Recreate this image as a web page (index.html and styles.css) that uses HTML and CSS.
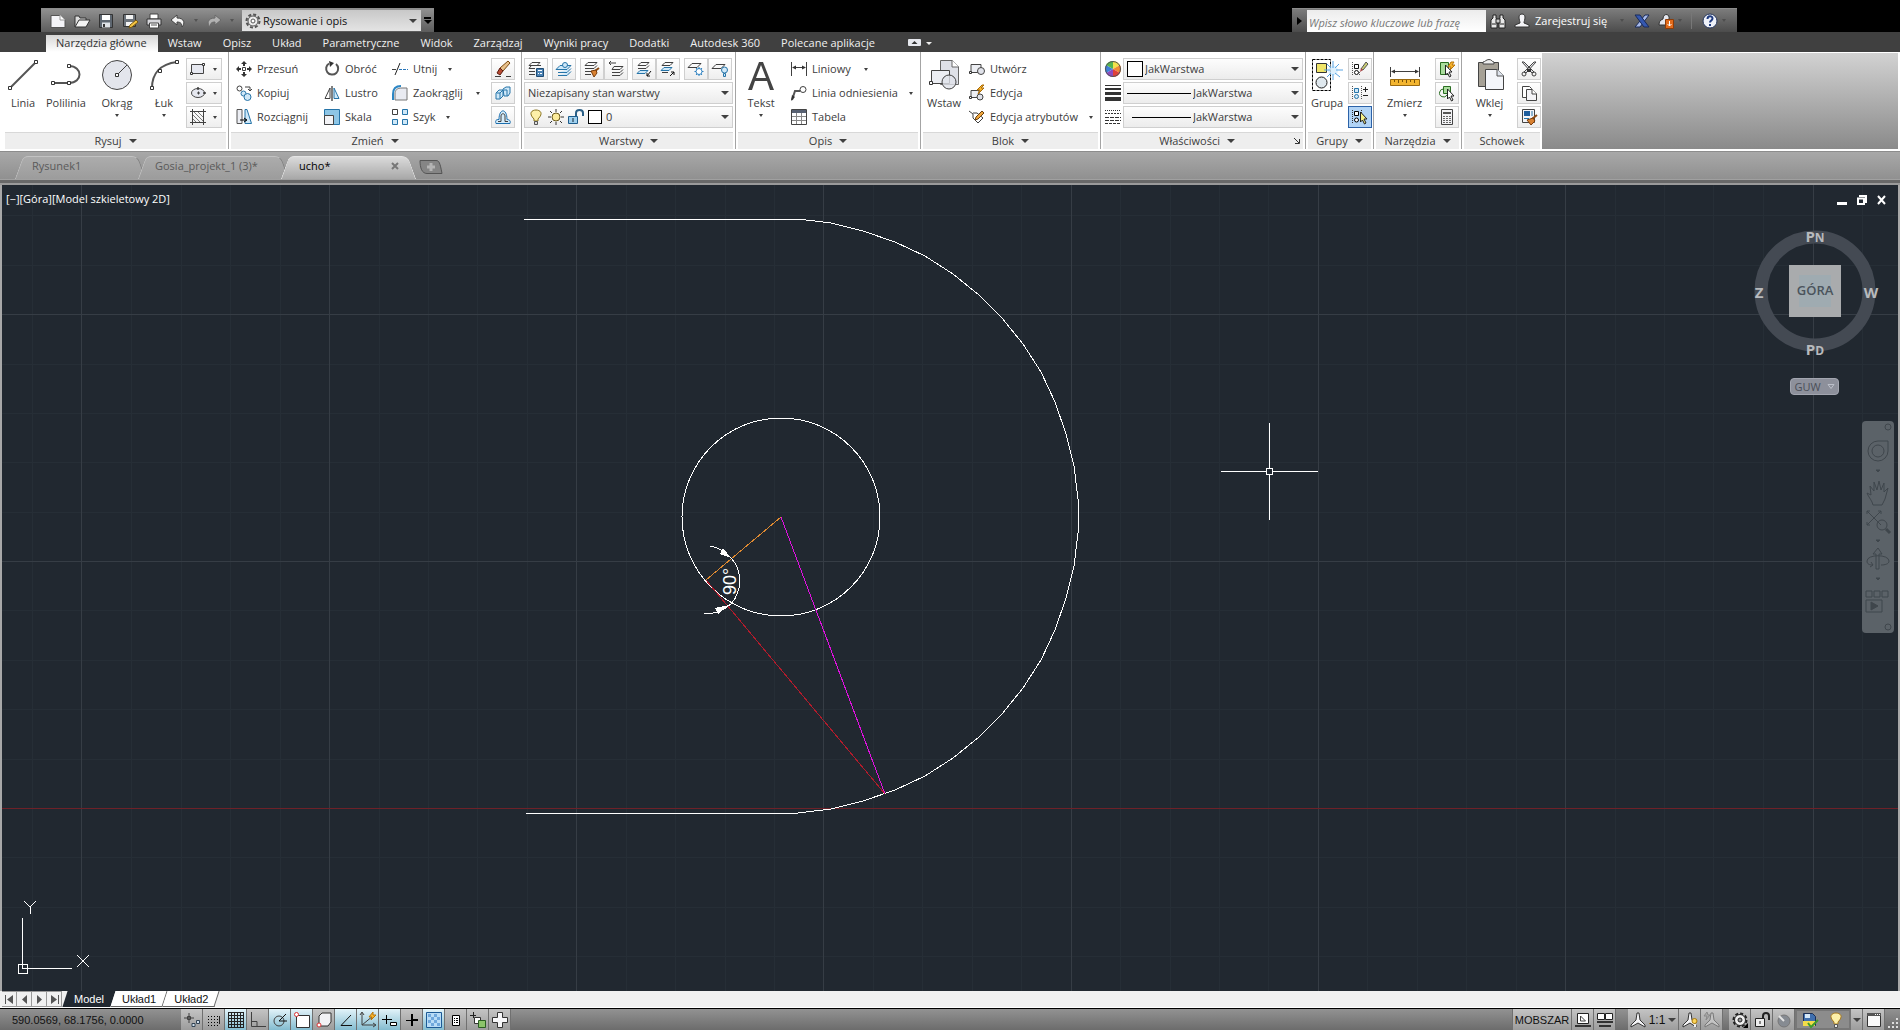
FILE: index.html
```html
<!DOCTYPE html>
<html lang="pl">
<head>
<meta charset="utf-8">
<title>ucho* - AutoCAD</title>
<link rel="stylesheet" href="styles.css">
</head>
<body>
<header class="titlebar">
  <div class="quick">
    <button class="qbtn" aria-label="Nowy"><svg class="i16" viewBox="0 0 16 16"><path d="M1 2.500h9l5 5v7H1z" fill="#f4f4f8" stroke="#555"/><path d="M10 2v5h5" stroke="#999" fill="#fff"/></svg></button>
    <button class="qbtn" aria-label="Otwórz"><svg class="i16" viewBox="0 0 16 16"><path d="M1 14V3h4l1 2h6v3" fill="#ddd" stroke="#333"/><path d="M1 14l4-7h11l-4 7z" fill="#f3f3f3" stroke="#333"/></svg></button>
    <button class="qbtn" aria-label="Zapisz"><svg class="i16" viewBox="0 0 16 16"><path d="M1.500 1.500h13v13h-13z" fill="#5d6670" stroke="#333"/><path d="M4 2h8v5H4z" fill="#fff"/><path d="M4 9.500h8v5H4z" fill="#dfe3e8"/><path d="M5 11h2v3H5z" fill="#333"/></svg></button>
    <button class="qbtn" aria-label="Zapisz jako"><svg class="i16" viewBox="0 0 16 16"><path d="M1.500 1.500h12v12h-12z" fill="#6c737b" stroke="#333"/><path d="M4 2h7v4H4zM4 9h7v4H4z" fill="#f4f4f4"/><path d="M7 15l1-3 6-5 2 2-6 5z" fill="#f5c542" stroke="#7a5a10"/></svg></button>
    <button class="qbtn" aria-label="Drukuj"><svg class="i16" viewBox="0 0 16 16"><path d="M4 1h8v5H4z" fill="#fff" stroke="#444"/><path d="M1 6h14v6H1z" fill="#d8d8dc" stroke="#333"/><path d="M3.500 10h9v5h-9z" fill="#fff" stroke="#444"/><path d="M5 12h6" stroke="#555"/></svg></button>
    <button class="qbtn" aria-label="Cofnij"><svg class="i16" viewBox="0 0 16 16"><path d="M7 2L1 7l6 5V9c4 0 5 2 5 5 3-3 3-9-5-9z" fill="#f4f4f4" stroke="#444"/></svg></button>
    <i class="tri faint"></i>
    <button class="qbtn redo" aria-label="Ponów"><svg class="i16" viewBox="0 0 16 16"><path d="M9 2l6 5-6 5V9c-4 0-5 2-5 5-3-3-3-9 5-9z" fill="#b2b2b2" stroke="#6a6a6a"/></svg></button>
    <i class="tri faint"></i>
    <label class="workspace">
      <svg class="i16" viewBox="0 0 16 16"><circle cx="8" cy="8" r="6.500" fill="none" stroke="#555" stroke-width="2" stroke-dasharray="3 2"/><circle cx="8" cy="8" r="5" fill="#eee" stroke="#555"/><circle cx="8" cy="8" r="2" fill="#fff" stroke="#555"/></svg>
      <select aria-label="Obszar roboczy"><option>Rysowanie i opis</option></select>
      <i class="tri big"></i>
    </label>
    <button class="more" aria-label="Dostosuj pasek"><i class="bar"></i><i class="tri big"></i></button>
  </div>
  <div class="infocenter">
    <button class="expand" aria-label="Zwiń"><svg width="5" height="8" viewBox="0 0 5 8"><path d="M0 0l5 4-5 4z"/></svg></button>
    <input class="search" type="text" aria-label="Szukaj" placeholder="Wpisz słowo kluczowe lub frazę">
    <button class="ibtn" aria-label="Wyszukaj"><svg class="i16" viewBox="0 0 16 16"><path d="M3 2h3v3l1 2v8H1V7l2-2zM10 2h3v3l2 2v8H9V7l1-2z" fill="#e8e8e8" stroke="#222"/><path d="M6 6h4v4H6z" fill="#ccc" stroke="#222"/><path d="M2 11h4M10 11h4" stroke="#222"/></svg></button>
    <button class="sign"><svg class="i16" viewBox="0 0 16 16"><path d="M5 4c0-4 6-4 6 0 0 3-1 4-1 6l5 2v2H1v-2l5-2c0-2-1-3-1-6z" fill="#f3f3f6" stroke="#333"/></svg>Zarejestruj się<i class="tri faint"></i></button>
    <button class="ibtn" aria-label="Exchange"><svg class="i16" viewBox="0 0 16 16"><path d="M15 2h-4L1 14h5z" fill="#a9bbea" stroke="#182a5a"/><path d="M1 2h5l9 12h-5z" fill="#3558b0" stroke="#182a5a"/></svg></button>
    <button class="ibtn" aria-label="Autodesk 360"><svg class="i16" viewBox="0 0 16 16"><path d="M5 6c0-6 7-6 6 0l2 6H1c0-3 1-5 4-6z" fill="#e4e6ee" stroke="#333"/><path d="M7.500 6.500h8v9h-8z" fill="#e26a1b" stroke="#8a3c0a"/><path d="M11.500 8v5m-2-2l2 2 2-2" fill="none" stroke="#fff"/></svg></button>
    <i class="tri faint"></i>
    <span class="vsep"></span>
    <button class="ibtn" aria-label="Pomoc"><svg class="i16" viewBox="0 0 16 16"><circle cx="8" cy="8" r="7" fill="#eef1f8" stroke="#26365c"/><path d="M5.500 6c0-3.500 5-3.500 5-.5 0 2-2.500 2-2.500 4" fill="none" stroke="#1f3b80" stroke-width="2"/><path d="M7 11h2v2H7z" fill="#1f3b80"/></svg></button>
    <i class="tri faint"></i>
  </div>
</header>

<nav class="tabs">
  <button class="tab on">Narzędzia główne</button><button class="tab">Wstaw</button><button class="tab">Opisz</button><button class="tab">Układ</button><button class="tab">Parametryczne</button><button class="tab">Widok</button><button class="tab">Zarządzaj</button><button class="tab">Wyniki pracy</button><button class="tab">Dodatki</button><button class="tab">Autodesk 360</button><button class="tab">Polecane aplikacje</button>
  <button class="minimize" aria-label="Minimalizuj wstążkę"><svg width="24" height="8" viewBox="0 0 24 8"><rect width="13" height="7" rx="1" fill="#e6e8ee"/><path d="M3.500 5h6l-3-3z" fill="#333"/><path d="M18 3h6l-3 3z" fill="#eee"/></svg></button>
</nav>

<main class="ribbon">
  <section class="panel draw">
    <div class="body">
      <button class="large linia"><svg class="i32" viewBox="0 0 32 32"><path d="M3 29L29 3" class="l2"/><path d="M1.500 27.500h3v3h-3zM27.500 1.500h3v3h-3z" class="pt"/></svg><span>Linia</span></button>
      <button class="large poli"><svg class="i32" viewBox="0 0 32 32"><path d="M3 24h16c14 0 14-17 0-17" class="l2"/><path d="M1.500 22.500h3v3h-3zM17.500 22.500h3v3h-3zM17.500 5.500h3v3h-3z" class="pt"/></svg><span>Polilinia</span></button>
      <button class="large okr"><svg class="i32" viewBox="0 0 32 32"><circle cx="16" cy="16" r="14.500" fill="#e3e5ec" stroke="#444"/><path d="M16 16L26 6" class="ln"/><path d="M14.500 14.500h3v3h-3z" class="pt"/></svg><span>Okrąg</span><i class="tri"></i></button>
      <button class="large luk"><svg class="i32" viewBox="0 0 32 32"><path d="M4 29C4 15 12 5 29 3" class="l2"/><path d="M2.500 27.500h3v3h-3zM10.500 10.500h3v3h-3zM27.500 1.500h3v3h-3z" class="pt"/></svg><span>Łuk</span><i class="tri"></i></button>
      <div class="stack">
        <button class="box split" aria-label="Prostokąt"><svg class="i16" viewBox="0 0 16 16"><path d="M1.500 3.500h12v9h-12z" fill="#e6e8f0" stroke="#444"/><path d="M.5 11.500h2v2h-2zM12.500 2.500h2v2h-2z" class="pt"/></svg><i class="tri"></i></button>
        <button class="box split" aria-label="Elipsa"><svg class="i16" viewBox="0 0 16 16"><ellipse cx="8" cy="8" rx="6.500" ry="4.500" fill="#e6e8f0" stroke="#444"/><path d="M7.500 2.500h1v2h-1zM13.500 7.500h2v1h-2zM7 8h3M8.500 6.500v3" class="ln"/></svg><i class="tri"></i></button>
        <button class="box split" aria-label="Kreskowanie"><svg class="i16" viewBox="0 0 16 16"><path d="M0 2.500h16M0 13.500h16M2.500 0v16M13.500 0v16" class="ln"/><path d="M3 10l3 3M3 6l7 7M4 3l9 9M8 3l5 5" stroke="#777"/></svg><i class="tri"></i></button>
      </div>
    </div>
    <button class="title">Rysuj<i class="tri big"></i></button>
  </section>

  <section class="panel modify">
    <div class="body">
      <div class="stack c1">
        <button class="small"><svg class="i16" viewBox="0 0 16 16"><path d="M6.500 6.500h3v3h-3z" class="ln"/><path d="M8 0l3 3H9v2H7V3H5zM8 16l3-3H9v-2H7v2H5zM0 8l3-3v2h2v2H3v2zM16 8l-3-3v2h-2v2h2v2z" fill="#333"/></svg>Przesuń</button>
        <button class="small"><svg class="i16" viewBox="0 0 16 16"><circle cx="3.500" cy="3.500" r="2.500" class="ln"/><circle cx="7.500" cy="8.500" r="2.500" class="bl"/><circle cx="11.500" cy="12" r="3.500" class="bl"/><path d="M9 2h5v3m-2-1l2 2 2-2" class="ln"/></svg>Kopiuj</button>
        <button class="small"><svg class="i16" viewBox="0 0 16 16"><path d="M1 .5h5v14H1z" fill="#eceef4" stroke="#555"/><path d="M9 .5h2l4.500 14H9z" class="bl"/><path d="M4 11h6m-2-2l3 2-3 2" stroke="#000" fill="none"/></svg>Rozciągnij</button>
      </div>
      <div class="stack c2">
        <button class="small"><svg class="i16" viewBox="0 0 16 16"><path d="M12 3a6 6 0 1 1-7-.5" class="l2"/><path d="M5 0l5 2-4 4z" fill="#333"/></svg>Obróć</button>
        <button class="small"><svg class="i16" viewBox="0 0 16 16"><path d="M6 3v10.500H1z" class="ln"/><path d="M10 3v10.500h5z" class="bl"/><path d="M8 1v15" stroke="#000"/></svg>Lustro</button>
        <button class="small"><svg class="i16" viewBox="0 0 16 16"><path d="M.5.5h15v15H.5z" fill="#8ec6e6" stroke="#2674a8"/><path d="M.5 6.500h9v9h-9z" fill="#f3f3f6" stroke="#444"/></svg>Skala</button>
      </div>
      <div class="stack c3">
        <button class="small"><svg class="i16" viewBox="0 0 16 16"><path d="M0 8.500h4" class="ln"/><path d="M7 8.500h9" stroke="#2674b8" stroke-dasharray="3 1"/><path d="M8 2L3 14" stroke="#222"/></svg>Utnij<i class="tri g"></i></button>
        <button class="small"><svg class="i16" viewBox="0 0 16 16"><path d="M3 15V9c0-4 2-6 7-6h5v12z" fill="#e9ebf2" stroke="#777"/><path d="M1 15V9c0-5 3-8 8-8" fill="none" stroke="#2c86c4" stroke-width="2"/></svg>Zaokrąglij<i class="tri g far"></i></button>
        <button class="small"><svg class="i16" viewBox="0 0 16 16"><path d="M.5.5h5v5h-5z" class="ln"/><path d="M10.500.5h5v5h-5zM.5 10.500h5v5h-5zM10.500 10.500h5v5h-5z" class="bl"/></svg>Szyk<i class="tri g"></i></button>
      </div>
      <div class="stack">
        <button class="box" aria-label="Wymaż"><svg class="i16" viewBox="0 0 16 16"><path d="M13 0l2 2-7 8-3-3z" fill="#e8c08a" stroke="#7a4a10"/><path d="M5 7l3 3-3 4-3-2z" fill="#b84a32" stroke="#5a1c10"/><path d="M0 15.500h6M11 15.500h5" class="ln"/></svg></button>
        <button class="box" aria-label="Rozbij"><svg class="i16" viewBox="0 0 16 16"><path d="M1 8l3-3h4v6l-3 3H1zM8 4l3-2h4v6l-2 3H9z" class="bl"/><path d="M1 8h4v6M5 8l3-3M9 5h3v6" class="bl"/></svg></button>
        <button class="box" aria-label="Odsunięcie"><svg class="i16" viewBox="0 0 16 16"><path d="M1 14.500h14c1-3-1-4-3-4C12-1 4-1 4 10.500c-3 0-4 1-3 4z" fill="#d5ecfa" stroke="#1d6fae"/><path d="M3 12.500h3V7c0-3 4-3 4 0v5.500h3" class="ln"/></svg></button>
      </div>
    </div>
    <button class="title">Zmień<i class="tri big"></i></button>
  </section>

  <section class="panel layers">
    <div class="body col">
      <div class="row">
        <button class="box" aria-label="Właściwości warstwy"><svg class="i16" viewBox="0 0 16 16"><path d="M4 1.500h8l-3 3H1zM1 7.500h6M1 10.500h6M1 13.500h6M3 5l-2 2.500M9 4.500h4" class="ln"/><path d="M8.500 7.500h7v8h-7z" fill="#4b82b4" stroke="#1f4c74"/><path d="M10 9h4v1h-4zM10 12h1v1h-1zM12 12h2v1h-2z" fill="#fff"/></svg></button>
        <button class="box" aria-label="Ustaw bieżącą"><svg class="i16" viewBox="0 0 16 16"><path d="M4 4.500h11l-4 4H0zM2 11.500h9l4-4M2 14.500h9l4-4" class="bl"/><circle cx="9" cy="4" r="2.500" class="bl"/></svg></button>
        <span class="pair"><button class="box" aria-label="Dopasuj"><svg class="i16" viewBox="0 0 16 16"><path d="M4 1.500h9l-3 3H1zM1 7.500h9l3-3M1 10.500h7M1 13.500h6" class="ln"/><path d="M15 7l-4 3" stroke="#8a4a14" stroke-width="2"/><path d="M7 10l5-1 1 3-3 4z" fill="#d98232" stroke="#7a3c0a"/></svg></button><button class="box" aria-label="Poprzednia"><svg class="i16" viewBox="0 0 16 16"><path d="M6 5.500h9l-3 3H4zM4 11.500h8l3-3M4 14.500h8l3-3M1 2h7M3 0L1 2l2 2" class="ln"/></svg></button></span>
        <span class="pair"><button class="box" aria-label="Izoluj"><svg class="i16" viewBox="0 0 16 16"><path d="M5 1.500h8l-3 3H2zM2 7.500h8l3-3" class="ln"/><path d="M4 9.500h8l-3 3H1z" class="bl"/><path d="M15 10l-4 5m0-3v3h3" stroke="#111" fill="none"/></svg></button><button class="box" aria-label="Cofnij izolację"><svg class="i16" viewBox="0 0 16 16"><path d="M5 1.500h8l-3 3H2zM2 11.500h6" class="ln"/><path d="M4 6.500h8l-3 3H1z" class="bl"/><path d="M10 15l4-4m-3 0h3v3" stroke="#111" fill="none"/></svg></button></span>
        <span class="pair"><button class="box" aria-label="Blokuj"><svg class="i16" viewBox="0 0 16 16"><path d="M4 2.500h9l-4 4H0z" class="ln"/><path d="M11 6v9M6.500 10.500h9M8 7l6 7M14 7l-6 7" stroke="#2c80c0"/><circle cx="11" cy="10.500" r="3" fill="#fff" stroke="#2c80c0"/></svg></button><button class="box" aria-label="Wyłącz"><svg class="i16" viewBox="0 0 16 16"><path d="M4 3.500h9l-4 4H0z" class="ln"/><circle cx="12.500" cy="9" r="3" class="bl"/><path d="M11.500 12.500h2v3h-2z" class="bl"/></svg></button></span>
      </div>
      <label class="combo"><select class="grow" aria-label="Stan warstwy"><option>Niezapisany stan warstwy</option></select><i class="tri big"></i></label>
      <label class="combo layer">
        <svg class="i16" viewBox="0 0 16 16"><path d="M6 10C0 4 4 1 8 1s8 3 2 9v2H6z" fill="#fdf0a8" stroke="#8a7420"/><path d="M6.500 12.500h3v3h-3z" fill="#ddd" stroke="#555"/></svg>
        <svg class="i16" viewBox="0 0 16 16"><circle cx="8" cy="8" r="4" fill="#fbeb9a" stroke="#6b5a1c"/><path d="M8 0v3M8 13v3M0 8h3M13 8h3M2 2l2 2M12 12l2 2M14 2l-2 2M4 12l-2 2" stroke="#333"/></svg>
        <svg class="i16" viewBox="0 0 16 16"><path d="M.5 7.500h9v7h-9z" fill="#9fd0ee" stroke="#1d5c8c"/><path d="M8 7V4c0-4 7-4 7 0v3" fill="none" stroke="#2a5f86" stroke-width="2"/><path d="M5 9v4" stroke="#123"/></svg>
        <span class="swatch"></span>
        <select class="grow" aria-label="Warstwa"><option>0</option></select><i class="tri big"></i>
      </label>
    </div>
    <button class="title">Warstwy<i class="tri big"></i></button>
  </section>

  <section class="panel annotate">
    <div class="body">
      <button class="large tekst"><svg class="i32" viewBox="0 0 32 32"><path d="M3 31L14 3h4l11 28h-4l-3-9H10l-3 9zM11 19h10L16 6z" fill="#444" fill-rule="evenodd"/></svg><span>Tekst</span><i class="tri"></i></button>
      <div class="stack">
        <button class="small"><svg class="i16" viewBox="0 0 16 16"><path d="M.5 1v14M15.500 1v14M2 6.500h12" class="ln"/><path d="M1 6.500l4-2v4zM15 6.500l-4-2v4z" fill="#333"/></svg>Liniowy<i class="tri g far"></i></button>
        <button class="small"><svg class="i16" viewBox="0 0 16 16"><path d="M1 15l3-9h5" class="l2"/><path d="M0 16l1-6 3 2z" fill="#333"/><circle cx="12" cy="4.500" r="3" class="ln"/></svg>Linia odniesienia<i class="tri g"></i></button>
        <button class="small"><svg class="i16" viewBox="0 0 16 16"><path d="M.5.5h15v15H.5z" fill="#fff" stroke="#444"/><path d="M1 1h14v3H1z" fill="#596273"/><path d="M1 7.500h14M1 11.500h14M5.500 4v11M10.500 4v11" stroke="#888"/></svg>Tabela</button>
      </div>
    </div>
    <button class="title">Opis<i class="tri big"></i></button>
  </section>

  <section class="panel block">
    <div class="body">
      <button class="large wst"><svg class="i32" viewBox="0 0 32 32"><path d="M12.500 1.500h12l6 6v18h-18z" fill="#dfe1e8" stroke="#666"/><path d="M24 1v7h7" fill="#fff" stroke="#666"/><path d="M3.500 11.500h18v13h-18z" fill="#eceef3" stroke="#444"/><circle cx="21" cy="23" r="7" fill="#e0e2ea" fill-opacity=".8" stroke="#444"/><path d="M1.500 22.500h3v3h-3z" class="pt"/></svg><span>Wstaw</span></button>
      <div class="stack">
        <button class="small"><svg class="i16" viewBox="0 0 16 16"><path d="M2 3.500h10v8H2z" fill="#eceef3" stroke="#444"/><circle cx="12" cy="10" r="3.500" fill="#e0e2ea" stroke="#444"/><path d="M.5 10.500h2v2h-2z" class="pt"/></svg>Utwórz</button>
        <button class="small"><svg class="i16" viewBox="0 0 16 16"><path d="M2 5.500h8v7H2z" fill="#eceef3" stroke="#444"/><circle cx="11" cy="12" r="3" fill="#e0e2ea" stroke="#444"/><path d="M13 0L8 5h3L9 9l6-6h-3l3-3z" fill="#f7b42c" stroke="#a86a08"/><path d="M.5 11.500h2v2h-2z" class="pt"/></svg>Edycja</button>
        <button class="small"><svg class="i16" viewBox="0 0 16 16"><path d="M0 2l4 3v4l5 5 5-5-6-5H4" class="ln"/><path d="M13 2l2 2-6 6-3 1 1-3z" fill="#f0a63c" stroke="#6a4210"/></svg>Edycja atrybutów<i class="tri g"></i></button>
      </div>
    </div>
    <button class="title">Blok<i class="tri big"></i></button>
  </section>

  <section class="panel props">
    <div class="body col">
      <div class="prop"><svg class="i16" viewBox="0 0 16 16"><path d="M8 8V0a8 8 0 0 1 7 4z" fill="#f3e24a"/><path d="M8 8l7-4a8 8 0 0 1 0 8z" fill="#ef8a34"/><path d="M8 8l7 4a8 8 0 0 1-7 4z" fill="#e0413a"/><path d="M8 8v8a8 8 0 0 1-7-4z" fill="#8b4bc0"/><path d="M8 8l-7 4a8 8 0 0 1 0-8z" fill="#3d7fd8"/><path d="M8 8L1 4a8 8 0 0 1 7-4z" fill="#54b44e"/><circle cx="8" cy="8" r="7.500" fill="none" stroke="#555"/></svg>
        <label class="combo"><span class="swatch"></span><select class="grow" aria-label="Kolor"><option>JakWarstwa</option></select><i class="tri big"></i></label></div>
      <div class="prop"><svg class="i16" viewBox="0 0 16 16"><path d="M0 0h16v1H0zM0 3h16v2H0zM0 7h16v3H0zM0 12h16v4H0z" fill="#333"/></svg>
        <label class="combo"><span class="sample wide"></span><select class="grow" aria-label="Grubość linii"><option>JakWarstwa</option></select><i class="tri big"></i></label></div>
      <div class="prop"><svg class="i16" viewBox="0 0 16 16"><path d="M0 1.500h16" stroke="#333" stroke-dasharray="1 1"/><path d="M0 4.500h16" stroke="#333" stroke-dasharray="2 1"/><path d="M0 8.500h16M0 11.500h16" stroke="#333" stroke-dasharray="4 1"/><path d="M0 14.500h16" stroke="#333" stroke-dasharray="3 1"/></svg>
        <label class="combo"><span class="sample"></span><select class="grow" aria-label="Rodzaj linii"><option>JakWarstwa</option></select><i class="tri big"></i></label></div>
    </div>
    <div class="title wlast"><button class="plain">Właściwości<i class="tri big"></i></button><button class="plain launcher" aria-label="Paleta właściwości"><svg width="6" height="6" viewBox="0 0 6 6"><path d="M0 0l5 5M5.500 1v4.500H1" fill="none" stroke="#333"/></svg></button></div>
  </section>

  <section class="panel groups">
    <div class="body">
      <button class="large gru"><svg class="i32" viewBox="0 0 32 32"><path d="M1.500.5h18v31h-18z" fill="none" stroke="#000" stroke-dasharray="3 1"/><path d="M5.500 4.500h10v9h-10z" fill="#f0e56a" stroke="#333"/><circle cx="10.500" cy="23.500" r="5.500" fill="#dfe8ee" stroke="#222"/><circle cx="22" cy="11.500" r="5" fill="#d5ecfc" fill-opacity=".8"/><path d="M22 2v7M22 15v6M13 11h6M25 11h7M16 5l4 4M28 5l-4 4M16 18l4-4M29 18l-5-4" stroke="#5aa5e4"/></svg><span>Grupa</span></button>
      <div class="stack">
        <button class="box" aria-label="Rozgrupuj"><svg class="i16" viewBox="0 0 16 16"><path d="M.5 1v14M7.500 11v4" stroke="#555" stroke-dasharray="1 1"/><path d="M2.500 3.500h4v4h-4z" fill="#fff" stroke="#111"/><circle cx="4.500" cy="11.500" r="2" fill="#fff" stroke="#111"/><path d="M14 1l2 2-5 6-2-1z" fill="#c9cc72" stroke="#555"/><path d="M9 7l2 2-3 2z" fill="#a44"/></svg></button>
        <button class="box" aria-label="Edycja grupy"><svg class="i16" viewBox="0 0 16 16"><path d="M.5 1v14M9.500 1v14" stroke="#555" stroke-dasharray="1 1"/><path d="M2.500 3.500h4v4h-4z" class="bl"/><circle cx="4.500" cy="11.500" r="2" class="bl"/><path d="M11 4.500h5M13.500 2v5M11 10.500h5" stroke="#222"/></svg></button>
        <button class="box on" aria-label="Wybór grupy"><svg class="i16" viewBox="0 0 16 16"><path d="M.5 1v14M9.500 1v5" stroke="#333" stroke-dasharray="1 1"/><path d="M2.500 2.500h4v4h-4z" fill="#fff" stroke="#000"/><circle cx="4.500" cy="11" r="2" fill="#fff" stroke="#000"/><path d="M8.500 3v10l2-2 2 4 1.500-1-2-4h3z" fill="#f4f08a" stroke="#222"/></svg></button>
      </div>
    </div>
    <button class="title">Grupy<i class="tri big"></i></button>
  </section>

  <section class="panel utils">
    <div class="body">
      <button class="large zmi"><svg class="i32" viewBox="0 0 32 32"><path d="M1.500 8v10M30.500 8v10M3 12.500h26" class="ln"/><path d="M2 12.500l4-2v4zM30 12.500l-4-2v4z" fill="#333"/><path d="M1.500 20.500h29v6h-29z" fill="#f3b52f" stroke="#9a6a10"/><path d="M5.500 21v2M9.500 21v3M13.500 21v2M17.500 21v3M21.500 21v2M25.500 21v3" stroke="#7a5208"/></svg><span>Zmierz</span><i class="tri"></i></button>
      <div class="stack">
        <button class="box" aria-label="Szybki wybór"><svg class="i16" viewBox="0 0 16 16"><path d="M1.500 1.500h8v12h-8z" fill="#a9dc9c" stroke="#2b6e22"/><path d="M12 1L9 6h3l-1 3 5-5h-3l2-3z" fill="#f7b42c" stroke="#b87408"/><path d="M6.500 4v10l2-2 2 4 1.500-1-2-4h3z" fill="#fff" stroke="#222"/></svg></button>
        <button class="box" aria-label="Wybierz podobne"><svg class="i16" viewBox="0 0 16 16"><path d="M5 4a4 4 0 1 0 3 6" fill="none" stroke="#2b6e22"/><path d="M4.500 1.500h7v7h-7z" fill="#a9dc9c" stroke="#2b6e22"/><path d="M8.500 4v10l2-2 2 4 1.500-1-2-4h3z" fill="#fff" stroke="#222"/></svg></button>
        <button class="box" aria-label="Kalkulator"><svg class="i16" viewBox="0 0 16 16"><path d="M2.500.5h11v15h-11z" fill="#f2f2f5" stroke="#444"/><path d="M4 3h8v2H4z" fill="#555"/><path d="M4 7.500h8M4 9.500h8M4 11.500h8M4 13.500h8" stroke="#666" stroke-dasharray="2 1"/></svg></button>
      </div>
    </div>
    <button class="title">Narzędzia<i class="tri big"></i></button>
  </section>

  <section class="panel clip">
    <div class="body">
      <button class="large wkl"><svg class="i32" viewBox="0 0 32 32"><path d="M4.500 3.500h20v24h-20z" fill="#a6a196" stroke="#444"/><path d="M9 5V3c2 0 3-2.500 6-2.500S18 3 20 3v2z" fill="#eee" stroke="#444"/><path d="M11.500 10.500h12l6 6v14h-18z" fill="#f4f6fa" stroke="#444"/><path d="M23 10v7h7" fill="#dfe5ee" stroke="#555"/></svg><span>Wklej</span><i class="tri"></i></button>
      <div class="stack">
        <button class="box" aria-label="Wytnij"><svg class="i16" viewBox="0 0 16 16"><path d="M1 1h2l10 10-2 1zM15 1h-2L3 11l2 1z" fill="#e4e4e8" stroke="#444"/><path d="M6 8h4v3H6z" fill="#333"/><circle cx="3" cy="13" r="2" class="ln"/><circle cx="13" cy="13" r="2" class="ln"/></svg></button>
        <button class="box" aria-label="Kopiuj"><svg class="i16" viewBox="0 0 16 16"><path d="M1.500 1.500h7l2 2v9h-9z" fill="#fff" stroke="#444"/><path d="M5.500 4.500h6l4 4v7h-10z" fill="#f4f4f7" stroke="#444"/><path d="M11 4v5h5" stroke="#444" fill="#fff"/></svg></button>
        <button class="box" aria-label="Wklej specjalnie"><svg class="i16" viewBox="0 0 16 16"><path d="M1.500.5h12v13h-12z" fill="#f4f4f7" stroke="#444"/><path d="M3 2h6v5H3z" fill="#1d5c9c"/><path d="M11 2v5M3 9.500h5" stroke="#2674a8"/><path d="M16 6l-5 4" stroke="#8a4a14" stroke-width="2"/><path d="M6 11l6-2 2 3-4 4z" fill="#d98232" stroke="#7a3c0a"/></svg></button>
      </div>
    </div>
    <div class="title">Schowek</div>
  </section>
  <div class="rest"></div>
</main>

<nav class="docs">
  <button class="doc d1"><span>Rysunek1</span></button>
  <button class="doc d2"><span>Gosia_projekt_1 (3)*</span></button>
  <button class="doc d3 on"><span>ucho*</span><svg width="8" height="8" viewBox="0 0 8 8"><path d="M1 1l6 6M7 1L1 7" stroke="#777" stroke-width="2"/></svg></button>
  <button class="newdoc" aria-label="Nowa karta"><svg width="24" height="16" viewBox="0 0 24 16"><path d="M1 1.500h16c3 0 4 2 6 13H8C3 14.500 1 9 1 1.500z" fill="#858585" stroke="#555"/><path d="M12 4v8M8 8h8" stroke="#b4b4b4" stroke-width="3"/></svg></button>
</nav>
<div class="frame"></div>

<section class="canvas">
  <svg class="drawing" aria-label="Rysunek" shape-rendering="crispEdges">
    <g transform="translate(-2 -185)" fill="none" stroke-width="1">
      <path class="minor" d="M32 185v2000M131 185v2000M181 185v2000M230 185v2000M280 185v2000M379 185v2000M428 185v2000M477 185v2000M527 185v2000M626 185v2000M675 185v2000M725 185v2000M774 185v2000M873 185v2000M922 185v2000M972 185v2000M1021 185v2000M1120 185v2000M1170 185v2000M1219 185v2000M1268 185v2000M1367 185v2000M1417 185v2000M1466 185v2000M1516 185v2000M1615 185v2000M1664 185v2000M1713 185v2000M1763 185v2000M1862 185v2000M2 215h4000M2 265h4000M2 364h4000M2 413h4000M2 462h4000M2 512h4000M2 610h4000M2 660h4000M2 709h4000M2 759h4000M2 857h4000M2 907h4000M2 956h4000"/>
      <path class="major" d="M81 185v2000M329 185v2000M576 185v2000M823 185v2000M1071 185v2000M1318 185v2000M1565 185v2000M1813 185v2000M2 314h4000M2 561h4000"/>
      <path class="axis" d="M2 808h4000"/>
      <path stroke="#fff" d="M524 219H798L831 223 863 231 895 242 925 256 953 274 979 295 1002 318 1023 344 1041 372 1055 402 1066 434 1074 466 1078 499V533L1074 566 1066 598 1055 630 1041 660 1023 688 1002 714 979 737 953 758 925 776 895 790 863 801 831 809 798 813H526"/>
      <circle cx="781" cy="517" r="99" stroke="#fff"/>
      <path stroke="#e010e0" d="M781 517L885 794"/>
      <path stroke="#b31b2b" d="M706 580L885 794"/>
      <path stroke="#e08a30" d="M706 580L781 517"/>
      <path stroke="#fff" d="M710 546c9 1 15 6 21 12 12 12 11 34 0 46-8 7-17 10-27 10"/>
      <path fill="#fff" d="M731 558l-11-4 3-6zM729 605l-14 3 3 6z"/>
      <path stroke="#fff" d="M1221 471h46M1273 471h45M1269 423v45M1269 475v45M1266 468h6v6h-6z"/>
      <text class="angle" transform="translate(736 595) rotate(-90)">90°</text>
    </g>
  </svg>
  <div class="viewlabel">[−][Góra][Model szkieletowy 2D]</div>
  <div class="winctl">
    <button aria-label="Minimalizuj"><svg width="10" height="10" viewBox="0 0 10 10"><path d="M0 7h10v3H0z" fill="#fff"/></svg></button>
    <button aria-label="Przywróć"><svg width="10" height="10" viewBox="0 0 10 10"><path d="M1 3.500h6V9H1zM3 2V1h6v6H8" fill="none" stroke="#fff" stroke-width="2"/></svg></button>
    <button aria-label="Zamknij"><svg width="10" height="10" viewBox="0 0 10 10"><path d="M1 1l7 8M8 1L1 9" stroke="#fff" stroke-width="2"/></svg></button>
  </div>
  <svg class="cube" width="130" height="122" viewBox="0 0 130 122">
    <circle cx="65" cy="61" r="54" fill="none" stroke="#444a53" stroke-width="13"/>
    <path d="M39 35h52v52H39z" fill="#a9abad"/><path d="M49 45h32v32H49z" fill="#9fabb1"/>
    <text x="65" y="65" class="face">GÓRA</text>
    <text x="65" y="12" class="dir">P<tspan class="sm">N</tspan></text><text x="65" y="125" class="dir">P<tspan class="sm">D</tspan></text>
    <text x="9" y="68" class="dir">Z</text><text x="121" y="68" class="dir">W</text>
  </svg>
  <button class="guw">GUW<svg width="8" height="5" viewBox="0 0 8 5"><path d="M1 .5h6l-3 4z" fill="none" stroke="#bcc0ca"/></svg></button>
  <div class="navbar">
    <svg width="32" height="212" viewBox="0 0 32 212" fill="none" stroke="#3f464c">
      <circle cx="26" cy="6" r="3"/><circle cx="26" cy="206" r="3"/>
      <path d="M16 20h10v10a10 10 0 1 1-10-10z"/><circle cx="16" cy="30" r="6"/>
      <path d="M10 81c-2-4-4-6-5-9l4 2-1-9 4 5V61l3 8 2-9 2 9 3-7v9l4-4-3 11-3 6h-9z"/>
      <path d="M5 90l14 14M19 90L5 104M5 93v-3h3M16 90h3v3M5 101v3h3"/><circle cx="20" cy="104" r="5"/><path d="M24 108l4 4" stroke-width="3"/>
      <path d="M14 148v-15h-3l5-6 4 6h-3v15zM5 140c0-7 22-7 22 0 0 3-4 4-8 4M5 140c0 3 2 4 6 4l-2-3M11 144l-3 2"/>
      <path d="M4 170h6v6H4zM12 170h6v6h-6zM20 170h6v6h-6zM4 179h16v12H4z"/><path d="M9 181v8l7-4z" fill="#3f464c"/>
      <path d="M14 49h4l-2 2zM14 119h4l-2 2zM14 157h4l-2 2z" fill="#3f464c"/>
    </svg>
  </div>
  <svg class="ucs" width="80" height="80" viewBox="0 0 80 80" fill="none" stroke="#fff" shape-rendering="crispEdges">
    <path d="M10 70V20M10 70h50M6 66h9v9H6zM12 3l6 6 6-6M18 9v7M65 57l12 12M77 57L65 69"/>
  </svg>
</section>

<footer>
  <div class="layouts">
    <button class="step" aria-label="Pierwszy"><svg width="9" height="9" viewBox="0 0 9 9"><path d="M0 0h1v9H0zM8 0v9L2 4.500z"/></svg></button>
    <button class="step" aria-label="Poprzedni"><svg width="9" height="9" viewBox="0 0 9 9"><path d="M7 0v9L2 4.500z"/></svg></button>
    <button class="step" aria-label="Następny"><svg width="9" height="9" viewBox="0 0 9 9"><path d="M2 0v9l5-4.500z"/></svg></button>
    <button class="step" aria-label="Ostatni"><svg width="9" height="9" viewBox="0 0 9 9"><path d="M8 0h1v9H8zM1 0v9l6-4.500z"/></svg></button>
    <button class="layout on">Model</button><button class="layout">Układ1</button><button class="layout">Układ2</button>
  </div>
  <div class="status">
    <output class="coords">590.0569, 68.1756, 0.0000</output>
    <div class="toggles">
      <button class="st" aria-label="Wiązania"><svg class="i16" viewBox="0 0 16 16"><path d="M0 6h10M5 1v10M3.500 4.500h3v3h-3z" class="ln"/><path d="M8 11.500h3v3H8zM12.500 8.500h3v3h-3z" fill="#cfe0ee" stroke="#345"/></svg></button>
      <button class="st" aria-label="Skok"><svg class="i16" viewBox="0 0 16 16"><path d="M2 4.500h10M2 7.500h10M2 10.500h10M2 13.500h12" stroke="#000" stroke-dasharray="1 2"/><path d="M13.500 4v8" stroke="#222"/></svg></button>
      <button class="st on" aria-label="Siatka"><svg class="i16" viewBox="0 0 16 16"><path d="M0 .5h16M0 3.500h16M0 6.500h16M0 9.500h16M0 12.500h16M0 15.500h16M.5 0v16M3.500 0v16M6.500 0v16M9.500 0v16M12.500 0v16M15.500 0v16" stroke="#222"/></svg></button>
      <button class="st" aria-label="Orto"><svg class="i16" viewBox="0 0 16 16"><path d="M1.500 0v14.500H16M2 9.500h5v5" class="ln"/></svg></button>
      <button class="st on" aria-label="Biegunowe"><svg class="i16" viewBox="0 0 16 16"><circle cx="7" cy="9" r="5" class="ln"/><path d="M14 2L7 9h8" stroke="#111" fill="none"/></svg></button>
      <button class="st on" aria-label="Obiekt"><svg class="i16" viewBox="0 0 16 16"><path d="M2.500 3.500h13v12h-13z" fill="#fff" stroke="#333"/><circle cx="2.500" cy="2.500" r="2" fill="#fff" stroke="#d33"/></svg></button>
      <button class="st" aria-label="Obiekt 3D"><svg class="i16" viewBox="0 0 16 16"><path d="M3 4l3-3h9v9l-3 4H3z" fill="#f2f2f5" stroke="#333"/><circle cx="3" cy="13" r="2" fill="#fff" stroke="#d33"/></svg></button>
      <button class="st on" aria-label="Śledzenie"><svg class="i16" viewBox="0 0 16 16"><path d="M13 3L3 13.500h11" fill="none" stroke="#111"/></svg></button>
      <button class="st on" aria-label="DLUW"><svg class="i16" viewBox="0 0 16 16"><path d="M2 1v12h13M2 13L13 4M0 3l2-3 2 3M13 11l3 2-3 2" class="ln"/><path d="M13 0L9 5h3l-1 3 5-5h-3z" fill="#f7b42c" stroke="#b87408"/></svg></button>
      <button class="st on" aria-label="Dynamiczne"><svg class="i16" viewBox="0 0 16 16"><path d="M0 7.500h10M4.500 3v9" stroke="#000"/><path d="M8.500 10.500h6v3h-6z" fill="#fff" stroke="#000"/></svg></button>
      <button class="st" aria-label="Szerokość linii"><svg class="i16" viewBox="0 0 16 16"><path d="M2 8.500h6" stroke="#000"/><path d="M8 2v12M8 8h6" stroke="#000" stroke-width="2"/></svg></button>
      <button class="st on" aria-label="Przezroczystość"><svg class="i16" viewBox="0 0 16 16"><path d="M.5.5h15v15H.5z" fill="#b8dcf6" stroke="#1c5a96"/><path d="M2 3.500h12M2 9.500h12" stroke="#6fa8dc" stroke-width="3" stroke-dasharray="3 3"/><path d="M5 6.500h10M5 12.500h10" stroke="#6fa8dc" stroke-width="3" stroke-dasharray="3 3"/></svg></button>
      <button class="st" aria-label="Szybkie właściwości"><svg class="i16" viewBox="0 0 16 16"><path d="M4.500 3.500h7v10h-7z" fill="#fff" stroke="#000"/><path d="M6 6h1v1H6zM8 6h2v1H8zM6 8h1v1H6zM8 8h2v1H8zM6 10h1v1H6zM8 10h2v1H8z" fill="#000"/></svg></button>
      <button class="st" aria-label="Cykl wyboru"><svg class="i16" viewBox="0 0 16 16"><path d="M0 3.500h6M3.500 0v6" stroke="#222"/><path d="M4.500 5.500h6v6h-6z" fill="#fff" stroke="#333"/><path d="M8.500 8.500h7v7h-7z" fill="#8bc46a" stroke="#2b5e22"/></svg></button>
      <button class="st" aria-label="Monitor opisów"><svg class="i16" viewBox="0 0 16 16"><path d="M5.500.5h5v5h5v5h-5v5h-5v-5h-5v-5h5z" fill="#f6f6f8" stroke="#333"/></svg></button>
    </div>
    <div class="tray">
      <button class="st text">MOBSZAR</button>
      <button class="st" aria-label="Model lub papier"><svg class="i16" viewBox="0 0 16 16"><path d="M2.500 1.500h11v10h-11z" fill="#fff" stroke="#222"/><path d="M5.500 4v5h5z" class="ln"/><path d="M0 14h16" stroke="#333" stroke-width="2"/></svg></button>
      <button class="st" aria-label="Szybki widok układów"><svg class="i16" viewBox="0 0 16 16"><path d="M.5 1.500h7v6h-7zM8.500 1.500h7v6h-7z" fill="#fff" stroke="#222"/><path d="M0 10h16M2 14h12" stroke="#333" stroke-width="2"/></svg></button>
      <span class="gap"></span>
      <button class="st scale"><svg class="i16" viewBox="0 0 16 16"><path d="M7 1h2l1 7 5 5v2l-7-4-7 4v-2l5-5z" fill="#f4f4f6" stroke="#333"/></svg>1:1<i class="tri big"></i></button>
      <button class="st" aria-label="Widoczność opisów"><svg class="i16" viewBox="0 0 16 16"><path d="M7 1h2l1 7 4 5v2l-6-4-7 4v-2l5-5z" fill="#f4f4f6" stroke="#333"/><circle cx="12.500" cy="9" r="2.500" fill="#fbd45a" stroke="#a87a10"/><path d="M12 12h2v3h-2z" fill="#eee"/></svg></button>
      <button class="st" aria-label="Automatyczne skale"><svg class="i16" viewBox="0 0 16 16"><path d="M7 1h2l1 7 5 5v2l-7-4-7 4v-2l5-5z" fill="#c4c4c4" stroke="#777"/><path d="M3 0L0 4h3l-1 4 4-5H4z" fill="#aaa" stroke="#888"/></svg></button>
      <span class="gap thin"></span>
      <button class="st" aria-label="Obszar roboczy"><svg class="i16" viewBox="0 0 16 16"><circle cx="8" cy="8" r="6.500" fill="none" stroke="#222" stroke-width="2" stroke-dasharray="3 2"/><circle cx="8" cy="8" r="5.500" fill="#eee" stroke="#222"/><circle cx="8" cy="8" r="2" fill="#999" stroke="#222"/><path d="M16 11v5h-5z" fill="#000"/></svg></button>
      <button class="st" aria-label="Blokada pasków"><svg class="i16" viewBox="0 0 16 16"><path d="M1.500 6.500h9v8h-9z" fill="#eee" stroke="#222"/><path d="M9 6V4c0-4 6-4 6 0v4" fill="none" stroke="#222" stroke-width="2"/><path d="M6 9v3" stroke="#222"/></svg></button>
      <button class="st" aria-label="Przyspieszenie sprzętowe"><svg class="i16" viewBox="0 0 16 16"><circle cx="8" cy="9" r="6" fill="#868b92" stroke="#777"/><path d="M3 4l5 5" stroke="#e4e4e4" stroke-width="2"/></svg></button>
      <div class="notify"><svg class="i16" viewBox="0 0 16 16"><path d="M1.500 1.500h9l3 3v9h-12z" fill="#3f6fae" stroke="#1b2f55"/><path d="M3 2h5v4H3z" fill="#d5e8f8"/><path d="M1 9h12v5H1z" fill="#f3dc4a"/><path d="M6 11l3 4 7-7" fill="none" stroke="#3f9b2c" stroke-width="2"/></svg><svg class="i16" viewBox="0 0 16 16"><path d="M6 10C0 4 4 1 8 1s8 3 2 9v2H6z" fill="#fdf0a8" stroke="#a87a20"/><path d="M6.500 12.500h3v3h-3z" fill="#eee" stroke="#555"/></svg></div>
      <button class="st narrow" aria-label="Menu paska stanu"><i class="tri big"></i></button>
      <button class="st" aria-label="Czysty ekran"><svg class="i16" viewBox="0 0 16 16"><path d="M1.500 1.500h13v13h-13z" fill="#fafafa" stroke="#333"/><path d="M1 1h14v3H1z" fill="#555"/><path d="M9 2.500h5" stroke="#fff" stroke-dasharray="1 1"/></svg></button>
      <svg class="grip" width="14" height="14" viewBox="0 0 14 14"><path d="M12 2v2M8 6v2M12 6v2M4 10v2M8 10v2M12 10v2" stroke="#ddd" stroke-width="2"/></svg>
    </div>
  </div>
</footer>
</body>
</html>
```
FILE: styles.css
```css
* { box-sizing: border-box; }
html, body { height: 100%; }
body { margin: 0; display: flex; flex-direction: column; background: #000; color: #3c3c3c; font: 11px/16px "Open Sans", "Noto Sans", sans-serif; overflow: hidden; }
button, select, input { font: inherit; color: inherit; border: 0; padding: 0; margin: 0; background: none; border-radius: 0; }
select { appearance: none; outline: 0; }
svg { flex: none; display: block; overflow: visible; }
button { white-space: nowrap; }

.i16 { width: 16px; height: 16px; }
.i32 { width: 32px; height: 32px; }
.ln { fill: none; stroke: #404040; }
.l2 { fill: none; stroke: #555; stroke-width: 2; }
.pt { fill: #fff; stroke: #333; }
.bl { fill: #cfe8f8; stroke: #2674a8; }

.tri { flex: none; width: 0; height: 0; border: 2px solid transparent; border-top: 3px solid #404040; border-bottom: 0; }
.tri.big { border-width: 4px 4px 0; }
.tri.faint { border-top-color: #444; opacity: .7; }
.tri.g { margin-left: 6px; }
.tri.g.far { margin-left: 8px; }

/* title bar */
.titlebar { flex: none; height: 32px; display: flex; justify-content: space-between; align-items: flex-end; padding: 0 163px 0 41px; }
.quick, .infocenter { height: 24px; display: flex; align-items: center; background: linear-gradient(#7c7c7c, #4c4c4c); border-top: 1px solid #8c8c8c; }
.quick { width: 393px; padding-left: 5px; background: linear-gradient(#909090, #5c5c5c); }
.qbtn { width: 24px; display: grid; place-items: center; }
.quick > .faint { margin: 0 4px; }
.redo { width: 24px; }
.workspace { margin-left: 4px; width: 179px; height: 21px; display: flex; align-items: center; gap: 2px; padding: 0 4px 0 3px; background: linear-gradient(#c8c8c8, #e4e4e4); color: #111; }
.workspace select { flex: 1; }
.more { flex: 1; display: flex; flex-direction: column; align-items: center; gap: 1px; }
.more .bar { width: 7px; height: 2px; background: #000; }
.more .tri { border-top-color: #000; }
.infocenter { width: 445px; }
.expand { width: 15px; display: grid; place-items: center; }
.search { width: 179px; height: 22px; padding: 3px 2px 0; background: linear-gradient(#ececec, #fff); font-style: italic; }
.search::placeholder { color: #777; opacity: 1; }
.ibtn { width: 24px; display: grid; place-items: center; }
.sign { width: 120px; display: flex; align-items: center; gap: 5px; padding-left: 4px; color: #fff; }
.sign .tri { margin-left: 8px; }
.vsep { width: 1px; height: 16px; background: #777; margin: 0 6px 0 9px; }

/* ribbon tabs */
.tabs { flex: none; height: 20px; background: #404040; display: flex; align-items: flex-end; padding-left: 46px; }
.tab { height: 17px; padding: 0 11px 2px 10px; color: #f0f0f0; line-height: 15px; }
.tab.on { background: linear-gradient(#d6d6d6, #fff); color: #333; }
.minimize { margin: 0 0 5px 22px; }

/* ribbon */
.ribbon { flex: none; height: 99px; display: flex; background: #fff; padding: 0 2px 2px 1px; }
.panel { flex: none; display: flex; flex-direction: column; border-right: 1px solid #a4a4a4; background: #fff; }
.body { flex: 1; display: flex; padding-top: 6px; }
.body.col { flex-direction: column; gap: 2px; padding-left: 2px; }
.title { height: 17px; margin: 0 2px; background: #eee; border-top: 1px solid #d8d8d8; display: flex; align-items: center; justify-content: center; gap: 7px; }
.plain { display: flex; align-items: center; gap: 7px; }
.stack { display: flex; flex-direction: column; gap: 2px; }
.small { height: 22px; display: flex; align-items: center; gap: 5px; }
.box { width: 24px; height: 22px; border: 1px solid #cfcfcf; background: linear-gradient(#fff, #eee); display: flex; align-items: center; justify-content: center; }
.box.on { background: #b2d4f6; border-color: #2c62a8; }
.split { width: 36px; padding-left: 3px; gap: 7px; justify-content: flex-start; }
.pair { display: flex; }
.large { display: flex; flex-direction: column; align-items: center; justify-content: flex-start; padding-top: 1px; align-self: stretch; }
.large span { margin-top: 4px; line-height: 16px; }
.large .tri { margin-top: 3px; }

.draw { width: 228px; padding-left: 2px; }
.linia { width: 40px; } .poli { width: 46px; } .okr { width: 56px; } .luk { width: 38px; margin-right: 3px; }
.modify { width: 293px; }
.modify .body { padding-left: 7px; }
.c1 { width: 88px; } .c2 { width: 68px; } .c3 { width: 99px; }
.layers { width: 214px; }
.row { display: flex; gap: 4px; }
.combo { height: 22px; flex: 1; display: flex; align-items: center; border: 1px solid #cfcfcf; background: linear-gradient(#fdfdfd, #ececec); padding: 0 3px; margin-right: 2px; }
.layers .combo { flex: none; }
.grow { flex: 1; min-width: 0; }
.layer { gap: 4px; }
.swatch { flex: none; width: 14px; height: 14px; background: #fff; border: 1px solid #000; }
.props .swatch { width: 16px; height: 16px; margin-right: 2px; }
.annotate { width: 185px; }
.tekst { width: 50px; margin-right: 5px; }
.block { width: 180px; }
.wst { width: 46px; margin-right: 2px; }
.props { width: 205px; }
.props .body { padding-left: 4px; }
.prop { display: flex; align-items: center; gap: 2px; }
.sample { width: 59px; height: 1px; background: #000; margin: 0 2px 0 5px; }
.sample.wide { width: 64px; margin-left: 0; }
.wlast { justify-content: flex-end; }
.launcher { margin: 0 3px 0 52px; }
.groups { width: 68px; }
.gru { width: 42px; }
.utils { width: 88px; }
.zmi { width: 61px; }
.clip { width: 80px; border-right: 0; }
.wkl { width: 55px; }
.rest { flex: 1; background: linear-gradient(#d2d2d2, #8a8a8a); margin-top: 1px; }

/* drawing tabs */
.docs { flex: none; height: 28px; border-top: 1px solid #8c8c8c; background: linear-gradient(#a8a8a8, #909090); display: flex; align-items: flex-end; padding-left: 19px; }
.doc { position: relative; height: 23px; display: flex; align-items: center; justify-content: space-between; z-index: 0; color: #5a5a5a; padding: 0 13px 3px; }
.doc::before, .doc::after { content: ""; position: absolute; z-index: -1; top: 0; bottom: 0; background: linear-gradient(#acacac, #9c9c9c); border-top: 1px solid #c2c2c2; }
.doc::before { left: 0; right: 50%; transform: skewX(-20deg); border-left: 1px solid #c2c2c2; border-radius: 5px 0 0 0; }
.doc::after { left: 40%; right: 0; transform: skewX(20deg); border-right: 1px solid #808080; border-radius: 0 6px 0 0; }
.doc.on { color: #000; padding-left: 14px; }
.doc.on::before, .doc.on::after { background: linear-gradient(#dadada, #a8a8a8); border-color: #e4e4e4; }
.d1 { width: 123px; } .d2 { width: 143px; } .d3 { width: 127px; }
.newdoc { margin: 0 0 4px 7px; }
.frame { flex: none; height: 6px; background: #686868; border-top: 1px solid #a0a0a0; border-bottom: 2px solid #9a9a9a; }

/* drawing area */
.canvas { flex: 1; min-height: 0; position: relative; background: #212830; border: solid #a8a8a8; border-width: 0 2px; overflow: hidden; }
.drawing { width: 100%; height: 100%; overflow: hidden; }
.minor { stroke: #262e36; }
.major { stroke: #363d45; }
.axis { stroke: #6e2128; }
.angle { font: 18px "Liberation Sans", Arial, sans-serif; fill: #fff; }
.viewlabel { position: absolute; left: 4px; top: 6px; color: #fff; }
.winctl { position: absolute; right: 11px; top: 10px; display: flex; gap: 10px; }
.cube { position: absolute; right: 18px; top: 45px; }
.face { font: 600 13px "Open Sans", sans-serif; text-anchor: middle; fill: #4b545c; }
.dir { font: 700 15px "Open Sans", sans-serif; text-anchor: middle; fill: #b8babd; }
.sm { font-size: 12px; }
.guw { position: absolute; right: 59px; top: 193px; width: 49px; height: 17px; border-radius: 4px; background: #8d909b; border: 1px solid #a3a6b0; color: #4a4e58; display: flex; align-items: center; justify-content: center; gap: 6px; }
.navbar { position: absolute; right: 4px; top: 236px; width: 32px; height: 212px; border-radius: 4px; background: #5b6268; }
.ucs { position: absolute; left: 10px; bottom: 13px; }

/* layout tabs */
.layouts { height: 17px; background: #f0f0f0; border-bottom: 1px solid #fff; display: flex; padding-left: 2px; font: 11px/15px "Liberation Sans", Arial, sans-serif; color: #111; }
.step { width: 15px; border: 1px solid #999; border-left: 0; display: grid; place-items: center; fill: #555; }
.layout { position: relative; z-index: 0; padding: 0 9px; }
.layout::before { content: ""; position: absolute; z-index: -1; inset: 0; border: solid #666; border-width: 0 1px 1px 0; transform: skewX(-18deg); background: #fff; }
.layout.on { color: #fff; margin-left: 3px; }
.layout.on::before { background: #212830; border: 0; }

/* status bar */
.status { height: 22px; border-top: 1px solid #000; background: linear-gradient(#929292, #6c6c6c); display: flex; align-items: stretch; color: #111; font: 11px/20px "Liberation Sans", Arial, sans-serif; }
.coords { width: 181px; padding: 1px 0 0 12px; white-space: nowrap; }
.toggles, .tray { display: flex; }
.tray { margin-left: auto; padding-right: 1px; }
.st { width: 22px; border-right: 1px solid #707070; background: linear-gradient(#c4c4c4, #9c9c9c); display: flex; align-items: center; justify-content: center; }
.st.on { background: linear-gradient(#e2f3f9, #84bcd0); }
.st.text { width: 60px; border-left: 1px solid #707070; }
.gap { width: 12px; } .gap.thin { width: 6px; }
.st.scale { width: 51px; gap: 3px; font-size: 12px; }
.notify { width: 56px; display: flex; align-items: center; justify-content: center; gap: 10px; background: #8c8c8c; border: 2px solid #777; }
.st.narrow { width: 12px; }
.grip { align-self: flex-end; }
```
